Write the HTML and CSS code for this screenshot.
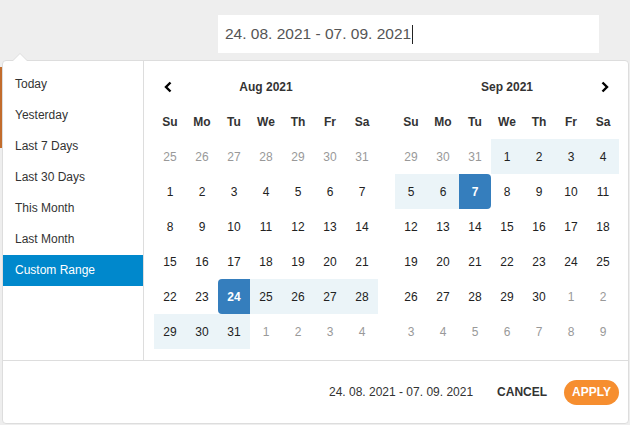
FILE: index.html
```html
<!DOCTYPE html>
<html>
<head>
    <title>Date Range Picker</title>
    <link rel="stylesheet" href="styles.css">
</head>
<body>
    <div class="toolbar">
        <div class="date-input">24. 08. 2021 - 07. 09. 2021<span class="text-cursor"></span></div>
    </div>
    <div class="content">
        <div class="stripe"></div>
    </div>

    <div class="picker">
        <div class="picker-body">
            <ul class="ranges">
                <li>Today</li>
                <li>Yesterday</li>
                <li>Last 7 Days</li>
                <li>Last 30 Days</li>
                <li>This Month</li>
                <li>Last Month</li>
                <li class="active">Custom Range</li>
            </ul>
            <div class="calendar left"><table id="cal-left"></table></div>
            <div class="calendar right"><table id="cal-right"></table></div>
        </div>
        <div class="picker-footer">
            <span class="selected">24. 08. 2021 - 07. 09. 2021</span>
            <button class="btn-cancel">Cancel</button>
            <button class="btn-apply">Apply</button>
        </div>
    </div>

    <script>
        const monthNames = ["Jan", "Feb", "Mar", "Apr", "May", "Jun", "Jul", "Aug", "Sep", "Oct", "Nov", "Dec"];
        const weekDays = ["Su", "Mo", "Tu", "We", "Th", "Fr", "Sa"];
        const rangeStart = new Date(2021, 7, 24);
        const rangeEnd = new Date(2021, 8, 7);

        const prevIcon = '<svg width="8" height="12" viewBox="0 0 8 12"><polyline points="6.5,1.5 2,6 6.5,10.5" fill="none" stroke="#000" stroke-width="2.4"/></svg>';
        const nextIcon = '<svg width="8" height="12" viewBox="0 0 8 12"><polyline points="1.5,1.5 6,6 1.5,10.5" fill="none" stroke="#000" stroke-width="2.4"/></svg>';

        function renderCalendar(table, year, month, showPrev, showNext) {
            let html = "<tr><th class='nav prev'>" + (showPrev ? prevIcon : "") + "</th>";
            html += "<th colspan='5' class='month'>" + monthNames[month] + " " + year + "</th>";
            html += "<th class='nav next'>" + (showNext ? nextIcon : "") + "</th></tr>";
            html += "<tr>" + weekDays.map(d => "<th>" + d + "</th>").join("") + "</tr>";

            // start on the sunday before the 1st (a full week back if the 1st is a sunday)
            let offset = new Date(year, month, 1).getDay();
            if (offset === 0) offset = 7;
            const day = new Date(year, month, 1 - offset);

            for (let row = 0; row < 6; row++) {
                html += "<tr>";
                for (let col = 0; col < 7; col++) {
                    const classes = [];
                    if (day.getMonth() !== month) {
                        classes.push("off");
                    } else {
                        if (day >= rangeStart && day <= rangeEnd) classes.push("in-range");
                        if (+day === +rangeStart) classes.push("active", "start-date");
                        if (+day === +rangeEnd) classes.push("active", "end-date");
                    }
                    html += '<td class="' + classes.join(" ") + '">' + day.getDate() + "</td>";
                    day.setDate(day.getDate() + 1);
                }
                html += "</tr>";
            }
            table.innerHTML = html;
        }

        renderCalendar(document.getElementById("cal-left"), 2021, 7, true, false);
        renderCalendar(document.getElementById("cal-right"), 2021, 8, false, true);
    </script>
</body>
</html>
```

FILE: styles.css
```css
body {
    margin: 0;
    background-color: #eee;
    font-family: "Liberation Sans", Arial, sans-serif;
}

.toolbar {
    padding-top: 15px;
}

.date-input {
    margin-left: 218px;
    width: 374px;
    height: 38px;
    line-height: 38px;
    padding-left: 7px;
    background-color: #fff;
    color: #555;
    font-size: 15.5px;
}

.text-cursor {
    display: inline-block;
    width: 1px;
    height: 19px;
    margin-left: 1px;
    vertical-align: middle;
    background-color: #222;
}

.content {
    margin-top: 14px;
}

.stripe {
    width: 2px;
    height: 81px;
    background-color: #c26c2c;
}

/* picker dropdown */

.picker {
    position: absolute;
    left: 2px;
    top: 60px;
    width: 625px;
    background-color: #fff;
    border: 1px solid #ddd;
    border-radius: 4px;
    font-size: 12px;
    color: #333;
}

.picker:before,
.picker:after {
    content: "";
    position: absolute;
    border-left: 7px solid transparent;
    border-right: 7px solid transparent;
}

.picker:before {
    left: 10px;
    top: -8px;
    border-bottom: 7px solid #ddd;
}

.picker:after {
    left: 10px;
    top: -7px;
    border-bottom: 7px solid #fff;
}

.picker-body {
    display: flex;
    height: 299px;
}

.ranges {
    width: 140px;
    margin: 0;
    padding: 8px 0 0 0;
    list-style: none;
    border-right: 1px solid #ddd;
}

.ranges li {
    height: 31px;
    line-height: 31px;
    padding: 0 12px;
}

.ranges li.active {
    background-color: #08c;
    color: #fff;
}

.calendar {
    padding-top: 8px;
}

.calendar.left {
    padding-left: 10px;
}

.calendar.right {
    padding-left: 17px;
}

.calendar table {
    border-collapse: collapse;
    border-spacing: 0;
}

.calendar th,
.calendar td {
    width: 32px;
    height: 35px;
    padding: 0;
    text-align: center;
    vertical-align: middle;
}

.calendar th {
    font-weight: bold;
    color: #333;
}

.calendar th.nav svg {
    display: block;
    margin: 0 auto;
}

.calendar th.prev svg {
    margin-left: 10px;
}

.calendar th.next svg {
    margin-left: 14px;
}

.calendar td {
    color: #222;
}

.calendar td.off {
    color: #999;
}

.calendar td.in-range {
    background-color: #ebf4f8;
}

.calendar td.active {
    background-color: #357ebd;
    color: #fff;
    font-weight: bold;
}

.calendar td.start-date {
    border-radius: 4px 0 0 4px;
}

.calendar td.end-date {
    border-radius: 0 4px 4px 0;
}

/* footer */

.picker-footer {
    display: flex;
    align-items: center;
    justify-content: flex-end;
    height: 62px;
    padding-right: 9px;
    border-top: 1px solid #ddd;
}

.selected {
    margin-right: 24px;
}

.picker-footer button {
    font-family: "Liberation Sans", Arial, sans-serif;
    font-size: 12px;
    font-weight: bold;
    text-transform: uppercase;
    border: none;
    cursor: pointer;
}

.btn-cancel {
    padding: 0;
    margin-right: 17px;
    background: none;
    color: #333;
}

.btn-apply {
    height: 25px;
    padding: 0 8px;
    border-radius: 13px;
    background-color: #f68e2f;
    color: #fff;
}
```
